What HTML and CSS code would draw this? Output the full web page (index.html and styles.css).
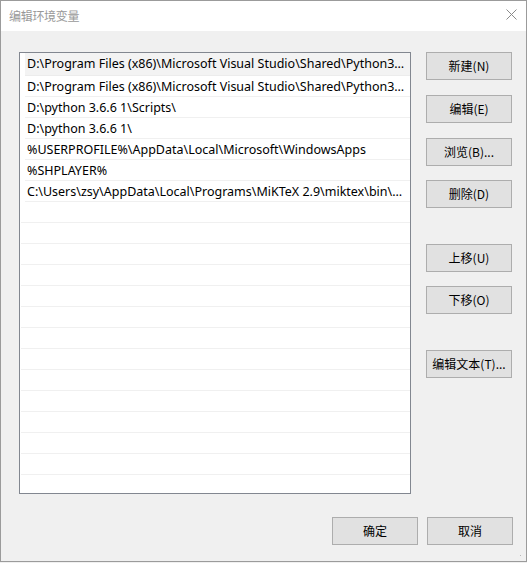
FILE: index.html
```html
<!DOCTYPE html>
<html lang="zh">
<head>
<meta charset="utf-8">
<title>编辑环境变量</title>
<link rel="stylesheet" href="styles.css">
</head>
<body>
<div class="window">
  <div class="titlebar">
    <span class="title">编辑环境变量</span>
    <svg class="close" width="11" height="11" viewBox="0 0 11 11"><path d="M0.5 0.5 L10.5 10.5 M10.5 0.5 L0.5 10.5" stroke="#8a8a8a" stroke-width="1" fill="none"/></svg>
  </div>
  <div class="content">
    <div class="main">
      <div class="list">
        <div class="row item first">D:\Program Files (x86)\Microsoft Visual Studio\Shared\Python36_64\Scripts\</div>
        <div class="row item">D:\Program Files (x86)\Microsoft Visual Studio\Shared\Python36_64\</div>
        <div class="row item">D:\python 3.6.6 1\Scripts\</div>
        <div class="row item">D:\python 3.6.6 1\</div>
        <div class="row item">%USERPROFILE%\AppData\Local\Microsoft\WindowsApps</div>
        <div class="row item">%SHPLAYER%</div>
        <div class="row item">C:\Users\zsy\AppData\Local\Programs\MiKTeX 2.9\miktex\bin\x64\</div>
        <div class="row"></div>
        <div class="row"></div>
        <div class="row"></div>
        <div class="row"></div>
        <div class="row"></div>
        <div class="row"></div>
        <div class="row"></div>
        <div class="row"></div>
        <div class="row"></div>
        <div class="row"></div>
        <div class="row"></div>
        <div class="row"></div>
        <div class="row"></div>
      </div>
      <div class="side">
        <button class="btn">新建(N)</button>
        <button class="btn g16">编辑(E)</button>
        <button class="btn g16">浏览(B)...</button>
        <button class="btn g15">删除(D)</button>
        <button class="btn g37">上移(U)</button>
        <button class="btn g15">下移(O)</button>
        <button class="btn g37">编辑文本(T)...</button>
      </div>
    </div>
    <div class="footer">
      <button class="btn">确定</button>
      <button class="btn">取消</button>
    </div>
  </div>
  <div class="grip"></div>
</div>
</body>
</html>
```

FILE: styles.css
```css
* { box-sizing: border-box; }
html, body { margin: 0; padding: 0; }
body {
  background: #f0f0f0;
  width: 527px;
  height: 563px;
  overflow: hidden;
  font-family: "Segoe UI", "Noto Sans", "Noto Sans CJK SC", sans-serif;
  font-size: 12px;
  color: #000;
}
.window {
  position: relative;
  width: 527px;
  height: 562px;
  border: 1px solid #9b9b9b;
  background: #f0f0f0;
}
.titlebar {
  height: 30px;
  background: #fff;
  display: flex;
  align-items: center;
  justify-content: space-between;
  padding: 0 9px 1px 8px;
}
.title {
  font-family: "Noto Sans CJK SC", sans-serif;
  font-size: 12px;
  color: #999;
  letter-spacing: -0.3px;
}
.close { display: block; margin-top: -2px; }
.content {
  padding: 21px 13px 0 18px;
}
.main {
  display: flex;
  align-items: flex-start;
}
.list {
  width: 392px;
  height: 442px;
  border: 1px solid #828790;
  background: #fff;
  overflow: hidden;
}
.row {
  height: 21px;
  margin-left: 1px;
  border-bottom: 1px solid #f0f0f0;
}
.row.item {
  margin-left: 5px;
  padding: 0 5px 0 2px;
  line-height: 21px;
  white-space: nowrap;
  overflow: hidden;
  text-overflow: ellipsis;
  font-family: "Segoe UI", "Noto Sans", "Noto Sans CJK SC", sans-serif;
  font-size: 12.5px;
}
.row.first {
  height: 23px;
  line-height: 22px;
  background: #f3f3f3;
  border-bottom-color: #ececec;
}
.side {
  margin-left: 15px;
  display: flex;
  flex-direction: column;
  width: 86px;
}
.btn {
  width: 86px;
  height: 28px;
  margin: 0;
  padding: 0;
  border: 1px solid #adadad;
  background: #e1e1e1;
  font-family: "Noto Sans CJK SC", sans-serif;
  font-size: 12px;
  color: #000;
  line-height: 26px;
  text-align: center;
}
.g15 { margin-top: 14px; }
.g16 { margin-top: 15px; }
.g37 { margin-top: 36px; }
.footer {
  margin-top: 23px;
  display: flex;
  justify-content: flex-end;
  gap: 9px;
}
.grip {
  position: absolute;
  right: 3px;
  bottom: 3px;
  width: 7px;
  height: 7px;
  background:
    radial-gradient(circle, #b8b8b8 0.8px, transparent 1px) 0 0 / 3px 3px;
  clip-path: polygon(100% 0, 100% 100%, 0 100%);
}
```
